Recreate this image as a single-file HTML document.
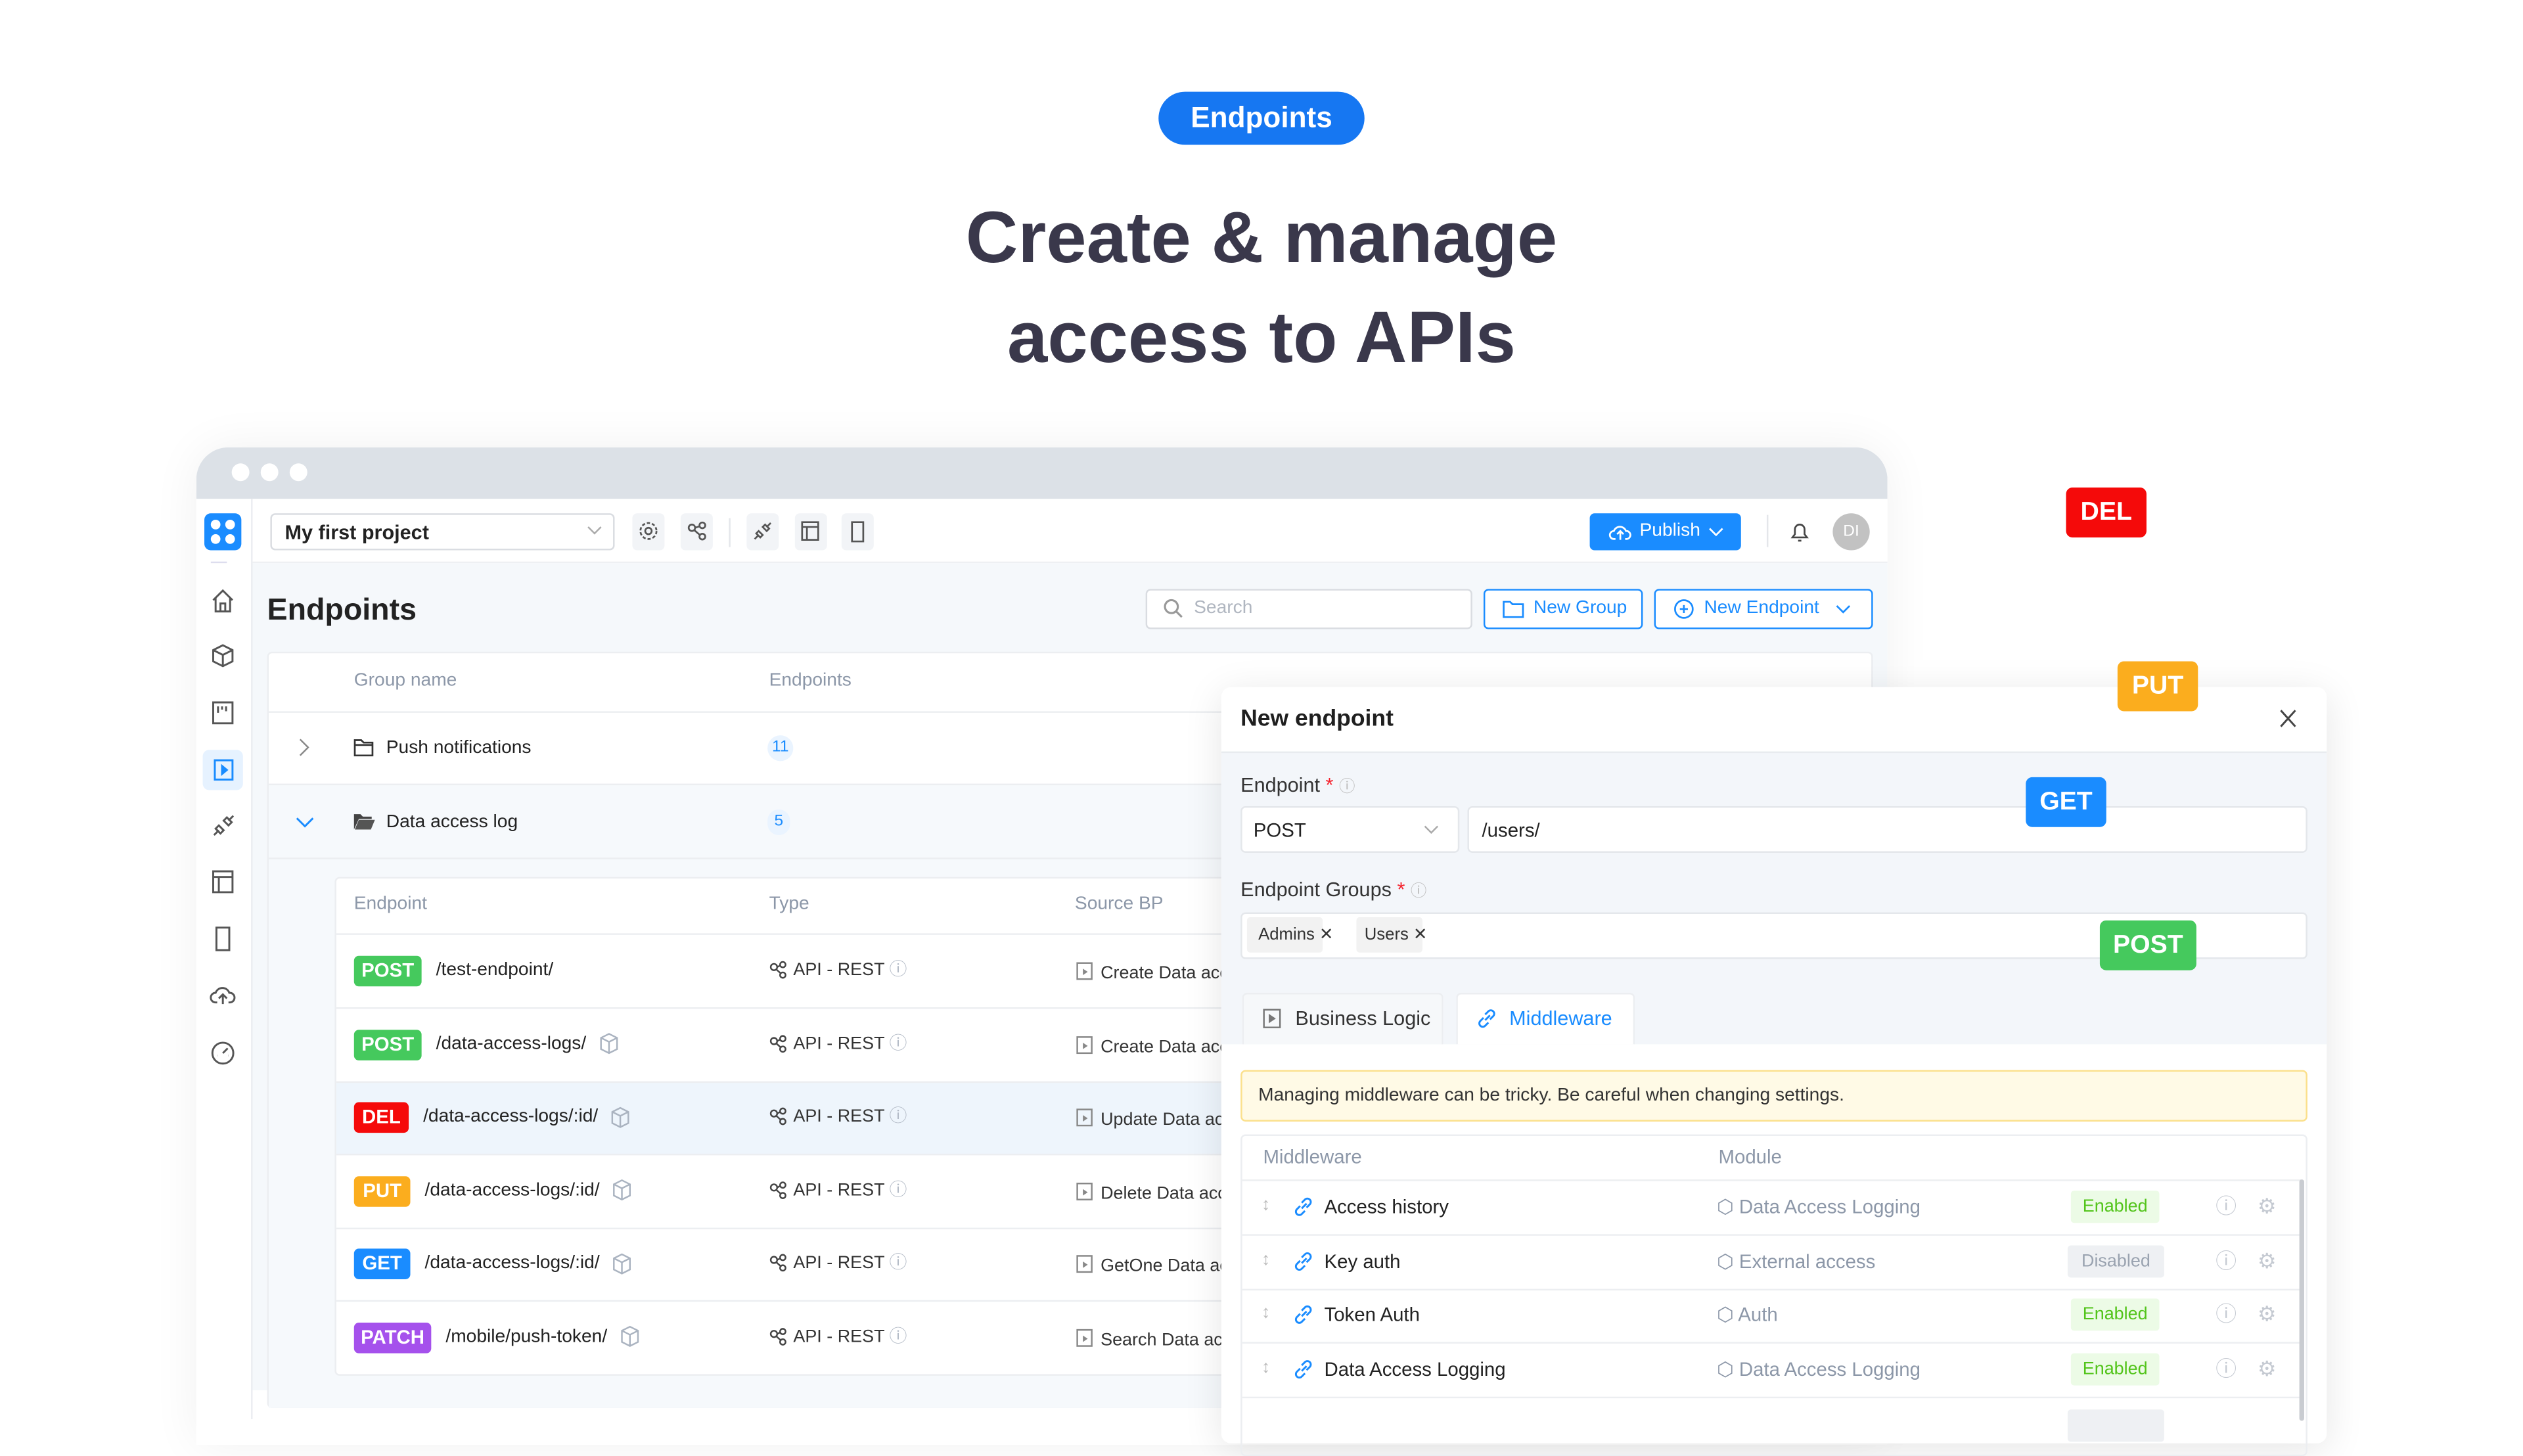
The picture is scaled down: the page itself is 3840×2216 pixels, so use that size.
<!DOCTYPE html>
<html><head><meta charset="utf-8"><style>
*{box-sizing:border-box;margin:0;padding:0}
html,body{width:3840px;height:2160px;overflow:hidden;background:#fff}
#r{position:absolute;left:0;top:0;width:1568px;height:882px;transform:scale(2.44898);transform-origin:0 0;font-family:"Liberation Sans",sans-serif;color:#222}
.a{position:absolute}
.t{position:absolute;white-space:nowrap;line-height:1}
.m{position:absolute;color:#fff;font-weight:bold;border-radius:3px;text-align:center;font-size:12px;line-height:19px;height:19px}
.fb{position:absolute;color:#fff;font-weight:bold;border-radius:4px;text-align:center;font-size:16px;line-height:31px;height:31px}
.ib{position:absolute;top:319px;width:20px;height:23px;background:#f2f4f7;border-radius:3px}
.hl{position:absolute;height:1px;background:#eceef1}
.gray{color:#8c97a8}
svg{position:absolute;overflow:visible}
.sh{display:inline-block;width:11px;height:11px;vertical-align:-1px;margin-right:3px}
.pb{display:inline-block;width:10px;height:11px;border:1px solid #888;vertical-align:-1px;margin-right:5px;position:relative}
.pb:after{content:"";position:absolute;left:3px;top:2.5px;border-left:3px solid #888;border-top:2.5px solid transparent;border-bottom:2.5px solid transparent}
</style></head><body><div id="r">

<div class="a" style="left:720px;top:57px;width:128px;height:33px;border-radius:17px;background:#1677f2;color:#fff;font-size:18px;font-weight:bold;text-align:center;line-height:33px">Endpoints</div>
<div class="t" style="left:0;width:1568px;text-align:center;top:125px;font-size:45px;font-weight:bold;color:#3a384b">Create &amp; manage</div>
<div class="t" style="left:0;width:1568px;text-align:center;top:187px;font-size:45px;font-weight:bold;color:#3a384b">access to APIs</div>

<div class="a" style="left:122px;top:278px;width:1051px;height:620px;border-radius:20px 20px 0 0;background:#fff;box-shadow:0 0 30px rgba(0,0,0,.06);overflow:hidden">
 <div class="a" style="left:0;top:0;width:1051px;height:32px;background:#dce1e7"></div>
 <div class="a" style="left:22px;top:10px;width:11px;height:11px;border-radius:50%;background:#fff"></div>
 <div class="a" style="left:40px;top:10px;width:11px;height:11px;border-radius:50%;background:#fff"></div>
 <div class="a" style="left:58px;top:10px;width:11px;height:11px;border-radius:50%;background:#fff"></div>
</div>
<div class="a" style="left:156px;top:310px;width:1px;height:572px;background:#eceef1"></div>
<div class="a" style="left:127px;top:319px;width:23px;height:23px;border-radius:4px;background:#1a8cff"></div>
<div class="a" style="left:131px;top:323px;width:6px;height:6px;border-radius:3px;background:#fff"></div><div class="a" style="left:140px;top:323px;width:6px;height:6px;border-radius:3px;background:#fff"></div><div class="a" style="left:131px;top:332px;width:6px;height:6px;border-radius:3px;background:#fff"></div><div class="a" style="left:140px;top:332px;width:6px;height:6px;border-radius:3px;background:#fff"></div>
<div class="a" style="left:131px;top:349px;width:10px;height:1px;background:#dde"></div>
<svg style="left:131px;top:366px" width="15" height="15" fill="none" stroke="#555" stroke-width="1.2"><path d="M1.5 7 7.5 1 13.5 7M3 5.5V14h9V5.5M6 14V9h3v5"/></svg>
<svg style="left:131px;top:400px" width="15" height="15" fill="none" stroke="#555" stroke-width="1.2"><path d="M7.5 1 13.5 4v7l-6 3-6-3V4zM1.5 4l6 3 6-3M7.5 7v7"/></svg>
<svg style="left:132px;top:436px" width="13" height="14" fill="none" stroke="#555" stroke-width="1.2"><path d="M.5.5h12v13H.5zM3.5 3v4M6 3v2M8.5 3v3"/></svg>
<div class="a" style="left:126px;top:466px;width:25px;height:25px;border-radius:4px;background:#e6f2ff"></div>
<svg style="left:133px;top:472px" width="12" height="13" fill="none" stroke="#1a8cff" stroke-width="1.2"><path d="M.5.5h11v12H.5z"/><path d="M5 4l3 2.5L5 9z" fill="#1a8cff"/></svg>
<svg style="left:132px;top:506px" width="14" height="14" fill="none" stroke="#555" stroke-width="1.2"><path d="M1 13l3-3M13 1l-3 3M4 7l3 3-2 2-3-3zM7 4l3 3 2-2-3-3z"/></svg>
<svg style="left:132px;top:541px" width="13" height="14" fill="none" stroke="#555" stroke-width="1.2"><path d="M.5.5h12v13H.5zM.5 4h12M4 4v9.5"/></svg>
<svg style="left:134px;top:576px" width="9" height="15" fill="none" stroke="#555" stroke-width="1.2"><path d="M.5.5h8v14h-8z"/></svg>
<svg style="left:131px;top:612px" width="15" height="13" fill="none" stroke="#555" stroke-width="1.2"><path d="M4 11H3a3 3 0 010-6 4.5 4.5 0 018.5 0 3 3 0 01.5 6h-1M7.5 12V6M5 8.5l2.5-2.5L10 8.5"/></svg>
<svg style="left:131px;top:647px" width="15" height="15" fill="none" stroke="#555" stroke-width="1.2"><circle cx="7.5" cy="7.5" r="6.5"/><path d="M7.5 7.5l3-3M4 9h.1M11 9h.1"/></svg>

<div class="a" style="left:157px;top:349px;width:1016px;height:1px;background:#eef0f3"></div>
<div class="a" style="left:168px;top:319px;width:214px;height:23px;border:1px solid #d9dce1;border-radius:3px"></div>
<div class="t" style="left:177px;top:325px;font-size:12.5px;font-weight:bold;color:#222">My first project</div>
<svg style="left:365px;top:327px" width="9" height="6" fill="none" stroke="#aaa"><path d="M.5.5l4 4 4-4"/></svg>
<div class="ib" style="left:393px"></div><div class="ib" style="left:423px"></div>
<div class="a" style="left:453px;top:322px;width:1px;height:18px;background:#e4e6ea"></div>
<div class="ib" style="left:464px"></div><div class="ib" style="left:494px"></div><div class="ib" style="left:523px"></div>
<svg style="left:397px;top:324px" width="12" height="12" fill="none" stroke="#555" stroke-width="1.1"><circle cx="6" cy="6" r="2"/><circle cx="6" cy="6" r="5" stroke-dasharray="2 1.2"/></svg>
<svg style="left:427px;top:324px" width="12" height="12" fill="none" stroke="#555" stroke-width="1.1"><circle cx="3" cy="4" r="2"/><circle cx="9.5" cy="2.5" r="1.8"/><circle cx="9.5" cy="9.5" r="1.8"/><path d="M5 4l3-1M4.5 5.5l3.5 3"/></svg>
<svg style="left:468px;top:324px" width="12" height="12" fill="none" stroke="#555" stroke-width="1.1"><path d="M1 11l2.5-2.5M11 1L8.5 3.5M3.5 6l2.5 2.5-1.5 1.5-2.5-2.5zM6 3.5l2.5 2.5 1.5-1.5L7.5 2z"/></svg>
<svg style="left:498px;top:324px" width="11" height="12" fill="none" stroke="#555" stroke-width="1.1"><path d="M.5.5h10v11H.5zM.5 3.5h10M3.5 3.5v8"/></svg>
<svg style="left:529px;top:324px" width="8" height="13" fill="none" stroke="#555" stroke-width="1.1"><path d="M.5.5h7v12h-7z"/></svg>
<div class="a" style="left:988px;top:319px;width:94px;height:23px;border-radius:3px;background:#1a8cff"></div>
<svg style="left:1000px;top:325px" width="14" height="11" fill="none" stroke="#fff" stroke-width="1.1"><path d="M4 10H3a2.5 2.5 0 010-5 4 4 0 017.5 0 2.5 2.5 0 01.5 5h-1M7 10.5V5M5 7l2-2 2 2"/></svg>
<div class="t" style="left:1019px;top:325px;font-size:11.5px;color:#fff">Publish</div>
<svg style="left:1062px;top:328px" width="9" height="5" fill="none" stroke="#fff" stroke-width="1.1"><path d="M.5.5l4 4 4-4"/></svg>
<div class="a" style="left:1098px;top:320px;width:1px;height:20px;background:#e4e6ea"></div>
<svg style="left:1113px;top:324px" width="11" height="13" fill="none" stroke="#444" stroke-width="1.1"><path d="M1 10h9L8.5 8V5A3 3 0 002.5 5v3zM4.5 12h2"/></svg>
<div class="a" style="left:1139px;top:319px;width:23px;height:23px;border-radius:50%;background:#c2c2c2;color:#fff;font-size:10px;text-align:center;line-height:23px">DI</div>

<div class="a" style="left:157px;top:350px;width:1016px;height:514px;background:#f5f8fb"></div>
<div class="t" style="left:166px;top:370px;font-size:19px;font-weight:bold;color:#222">Endpoints</div>
<div class="a" style="left:712px;top:366px;width:203px;height:25px;border:1px solid #d9dce1;border-radius:3px;background:#fff"></div>
<svg style="left:723px;top:372px" width="12" height="12" fill="none" stroke="#999" stroke-width="1.3"><circle cx="5" cy="5" r="4"/><path d="M8 8l3.5 3.5"/></svg>
<div class="t" style="left:742px;top:373px;font-size:11.5px;color:#b0b6c0">Search</div>
<div class="a" style="left:922px;top:366px;width:99px;height:25px;border:1px solid #1a8cff;border-radius:3px;background:#fff"></div>
<svg style="left:934px;top:373px" width="13" height="11" fill="none" stroke="#1a8cff" stroke-width="1.1"><path d="M.5 1h4l1.5 1.5h6.5v8H.5z"/></svg>
<div class="t" style="left:953px;top:373px;font-size:11.5px;color:#1a8cff">New Group</div>
<div class="a" style="left:1028px;top:366px;width:136px;height:25px;border:1px solid #1a8cff;border-radius:3px;background:#fff"></div>
<svg style="left:1040px;top:372px" width="13" height="13" fill="none" stroke="#1a8cff" stroke-width="1.1"><circle cx="6.5" cy="6.5" r="5.5"/><path d="M6.5 4v5M4 6.5h5"/></svg>
<div class="t" style="left:1059px;top:373px;font-size:11.5px;color:#1a8cff">New Endpoint</div>
<svg style="left:1141px;top:376px" width="9" height="5" fill="none" stroke="#1a8cff" stroke-width="1.1"><path d="M.5.5l4 4 4-4"/></svg>

<div class="a" style="left:166px;top:405px;width:998px;height:470px;background:#fff;border:1px solid #eceef1;border-radius:3px"></div>
<div class="t gray" style="left:220px;top:418px;font-size:11.5px">Group name</div>
<div class="t gray" style="left:478px;top:418px;font-size:11.5px">Endpoints</div>
<div class="hl" style="left:167px;top:442px;width:996px"></div>
<svg style="left:186px;top:459px" width="6" height="11" fill="none" stroke="#888"><path d="M.5.5l5 5-5 5"/></svg>
<svg style="left:220px;top:459px" width="12" height="11" fill="none" stroke="#333" stroke-width="1.1"><path d="M.5 1h4l1.5 1.5h5.5v8H.5zM.5 4h11"/></svg>
<div class="t" style="left:240px;top:460px;font-size:11.5px;color:#222">Push notifications</div>
<div class="a" style="left:477px;top:457px;width:16px;height:16px;border-radius:8px;background:#eaf4ff;color:#1a8cff;font-size:10px;text-align:center;line-height:16px">11</div>
<div class="a" style="left:167px;top:487px;width:996px;height:388px;background:#f6f9fc;border-top:1px solid #eceef1"></div>
<svg style="left:184px;top:508px" width="11" height="6" fill="none" stroke="#1a8cff" stroke-width="1.2"><path d="M.5.5l5 5 5-5"/></svg>
<svg style="left:220px;top:505px" width="13" height="11"><path d="M0 1h4l1.5 1.5H11V4H3L0 10.5z" fill="#444"/><path d="M3 4.5h10L10.5 10.5H.5z" fill="#555"/></svg>
<div class="t" style="left:240px;top:506px;font-size:11.5px;color:#222">Data access log</div>
<div class="a" style="left:477px;top:503px;width:14px;height:16px;border-radius:8px;background:#eaf4ff;color:#1a8cff;font-size:10px;text-align:center;line-height:16px">5</div>
<div class="hl" style="left:167px;top:533px;width:996px"></div>

<div class="a" style="left:208px;top:545px;width:955px;height:310px;background:#fff;border:1px solid #eceef1;border-radius:3px"></div>
<div class="t gray" style="left:220px;top:557px;font-size:11.5px">Endpoint</div>
<div class="t gray" style="left:478px;top:557px;font-size:11.5px">Type</div>
<div class="t gray" style="left:668px;top:557px;font-size:11.5px">Source BP</div>
<div class="hl" style="left:209px;top:580px;width:953px"></div>
<div class="a" style="left:209px;top:672px;width:953px;height:45px;background:#eef5fc"></div>
<div class="hl" style="left:209px;top:626px;width:953px"></div><div class="hl" style="left:209px;top:672px;width:953px"></div><div class="hl" style="left:209px;top:717px;width:953px"></div><div class="hl" style="left:209px;top:763px;width:953px"></div><div class="hl" style="left:209px;top:808px;width:953px"></div>

<div class="m" style="left:220px;top:594px;width:42px;background:#45c95d">POST</div><div class="t" style="left:271px;top:598px;font-size:11.5px">/test-endpoint/</div>
<div class="m" style="left:220px;top:640px;width:42px;background:#45c95d">POST</div><div class="t" style="left:271px;top:644px;font-size:11.5px">/data-access-logs/</div>
<div class="m" style="left:220px;top:685px;width:34px;background:#f50a0a">DEL</div><div class="t" style="left:263px;top:689px;font-size:11.5px">/data-access-logs/:id/</div>
<div class="m" style="left:220px;top:731px;width:35px;background:#fbad1e">PUT</div><div class="t" style="left:264px;top:735px;font-size:11.5px">/data-access-logs/:id/</div>
<div class="m" style="left:220px;top:776px;width:35px;background:#1a8cff">GET</div><div class="t" style="left:264px;top:780px;font-size:11.5px">/data-access-logs/:id/</div>
<div class="m" style="left:220px;top:822px;width:48px;background:#a551ec">PATCH</div><div class="t" style="left:277px;top:826px;font-size:11.5px">/mobile/push-token/</div>
<svg style="left:373px;top:642px" width="11" height="13" fill="none" stroke="#aab3c0" stroke-width="1"><path d="M5.5.5l5 2.5v7l-5 2.5-5-2.5V3zM.5 3l5 2.5 5-2.5M5.5 5.5v7"/></svg>
<svg style="left:380px;top:688px" width="11" height="13" fill="none" stroke="#aab3c0" stroke-width="1"><path d="M5.5.5l5 2.5v7l-5 2.5-5-2.5V3zM.5 3l5 2.5 5-2.5M5.5 5.5v7"/></svg>
<svg style="left:381px;top:733px" width="11" height="13" fill="none" stroke="#aab3c0" stroke-width="1"><path d="M5.5.5l5 2.5v7l-5 2.5-5-2.5V3zM.5 3l5 2.5 5-2.5M5.5 5.5v7"/></svg>
<svg style="left:381px;top:779px" width="11" height="13" fill="none" stroke="#aab3c0" stroke-width="1"><path d="M5.5.5l5 2.5v7l-5 2.5-5-2.5V3zM.5 3l5 2.5 5-2.5M5.5 5.5v7"/></svg>
<svg style="left:386px;top:824px" width="11" height="13" fill="none" stroke="#aab3c0" stroke-width="1"><path d="M5.5.5l5 2.5v7l-5 2.5-5-2.5V3zM.5 3l5 2.5 5-2.5M5.5 5.5v7"/></svg>

<svg width="0" height="0"><defs><g id="sh" fill="none" stroke="#444" stroke-width="1"><circle cx="3" cy="4" r="2"/><circle cx="8.5" cy="2.5" r="1.7"/><circle cx="8.5" cy="9" r="1.7"/><path d="M5 4l2-1M4.5 5.5l2.8 2.5"/></g></defs></svg>
<svg style="left:478px;top:597px" width="11" height="11"><use href="#sh"/></svg>
<svg style="left:478px;top:643px" width="11" height="11"><use href="#sh"/></svg>
<svg style="left:478px;top:688px" width="11" height="11"><use href="#sh"/></svg>
<svg style="left:478px;top:734px" width="11" height="11"><use href="#sh"/></svg>
<svg style="left:478px;top:779px" width="11" height="11"><use href="#sh"/></svg>
<svg style="left:478px;top:825px" width="11" height="11"><use href="#sh"/></svg>
<div class="t" style="left:493px;top:598px;font-size:11px;color:#333">API - REST <span style="color:#b0b8c4">ⓘ</span></div>
<div class="t" style="left:493px;top:644px;font-size:11px;color:#333">API - REST <span style="color:#b0b8c4">ⓘ</span></div>
<div class="t" style="left:493px;top:689px;font-size:11px;color:#333">API - REST <span style="color:#b0b8c4">ⓘ</span></div>
<div class="t" style="left:493px;top:735px;font-size:11px;color:#333">API - REST <span style="color:#b0b8c4">ⓘ</span></div>
<div class="t" style="left:493px;top:780px;font-size:11px;color:#333">API - REST <span style="color:#b0b8c4">ⓘ</span></div>
<div class="t" style="left:493px;top:826px;font-size:11px;color:#333">API - REST <span style="color:#b0b8c4">ⓘ</span></div>
<div class="t" style="left:669px;top:598px;font-size:11px;color:#333"><span class="pb"></span>Create Data acc</div>
<div class="t" style="left:669px;top:644px;font-size:11px;color:#333"><span class="pb"></span>Create Data acc</div>
<div class="t" style="left:669px;top:689px;font-size:11px;color:#333"><span class="pb"></span>Update Data ac</div>
<div class="t" style="left:669px;top:735px;font-size:11px;color:#333"><span class="pb"></span>Delete Data acc</div>
<div class="t" style="left:669px;top:780px;font-size:11px;color:#333"><span class="pb"></span>GetOne Data ac</div>
<div class="t" style="left:669px;top:826px;font-size:11px;color:#333"><span class="pb"></span>Search Data acc</div>

<div class="a" style="left:759px;top:427px;width:687px;height:470px;background:#fff;border-radius:6px;box-shadow:0 4px 24px rgba(0,0,0,.10);overflow:hidden">
 <div class="a" style="left:0;top:40px;width:687px;height:182px;background:#f3f6fa;border-top:1px solid #e8ebef"></div>
</div>
<div class="t" style="left:771px;top:440px;font-size:14.5px;font-weight:bold;color:#1f1f1f">New endpoint</div>
<svg style="left:1417px;top:441px" width="10" height="11" fill="none" stroke="#444" stroke-width="1.2"><path d="M.5.5l9 10M9.5.5l-9 10"/></svg>
<div class="t" style="left:771px;top:482px;font-size:12.5px;color:#333">Endpoint <span style="color:#f5222d">*</span> <span style="color:#bbb;font-size:10px">ⓘ</span></div>
<div class="a" style="left:771px;top:501px;width:136px;height:29px;background:#fff;border:1px solid #e4e7eb;border-radius:3px"></div>
<div class="t" style="left:779px;top:510px;font-size:12px;color:#222">POST</div>
<svg style="left:885px;top:513px" width="9" height="5" fill="none" stroke="#aaa"><path d="M.5.5l4 4 4-4"/></svg>
<div class="a" style="left:912px;top:501px;width:522px;height:29px;background:#fff;border:1px solid #e4e7eb;border-radius:3px"></div>
<div class="t" style="left:921px;top:510px;font-size:12px;color:#222">/users/</div>
<div class="t" style="left:771px;top:547px;font-size:12.5px;color:#333">Endpoint Groups <span style="color:#f5222d">*</span> <span style="color:#bbb;font-size:10px">ⓘ</span></div>
<div class="a" style="left:771px;top:567px;width:663px;height:29px;background:#fff;border:1px solid #e4e7eb;border-radius:3px"></div>
<div class="a" style="left:775px;top:570px;width:47px;height:22px;background:#f2f2f2;border-radius:2px"></div>
<div class="t" style="left:782px;top:576px;font-size:10.5px;color:#333">Admins ✕</div>
<div class="a" style="left:843px;top:570px;width:41px;height:22px;background:#f2f2f2;border-radius:2px"></div>
<div class="t" style="left:848px;top:576px;font-size:10.5px;color:#333">Users ✕</div>
<div class="a" style="left:772px;top:617px;width:125px;height:32px;background:#f6f8fa;border:1px solid #eceef1;border-bottom:0;border-radius:3px 3px 0 0"></div>
<svg style="left:785px;top:627px" width="11" height="12" fill="none" stroke="#777"><path d="M.5.5h10v11H.5z"/><path d="M4 4l3 2-3 2z" fill="#777"/></svg>
<div class="t" style="left:805px;top:627px;font-size:12.5px;color:#333">Business Logic</div>
<div class="a" style="left:905px;top:617px;width:111px;height:32px;background:#fff;border:1px solid #eceef1;border-bottom:0;border-radius:3px 3px 0 0"></div>
<svg style="left:918px;top:627px" width="12" height="12" fill="none" stroke="#1a8cff" stroke-width="1.2"><path d="M5 7l3-3M4 5.5l-2 2a2 2 0 003 3l2-2M8 6.5l2-2a2 2 0 00-3-3l-2 2"/></svg>
<div class="t" style="left:938px;top:627px;font-size:12.5px;color:#1a8cff">Middleware</div>
<div class="a" style="left:771px;top:665px;width:663px;height:32px;background:#fffae6;border:1px solid #fbe08c;border-radius:3px"></div>
<div class="t" style="left:782px;top:676px;font-size:11.5px;color:#333">Managing middleware can be tricky. Be careful when changing settings.</div>
<div class="a" style="left:771px;top:705px;width:663px;height:200px;border:1px solid #eceef1;border-radius:3px"></div>
<div class="t" style="left:785px;top:713px;font-size:12px;color:#8c97a8">Middleware</div>
<div class="t" style="left:1068px;top:713px;font-size:12px;color:#8c97a8">Module</div>
<div class="hl" style="left:772px;top:733px;width:658px"></div><div class="hl" style="left:772px;top:767px;width:658px"></div><div class="hl" style="left:772px;top:801px;width:658px"></div><div class="hl" style="left:772px;top:834px;width:658px"></div><div class="hl" style="left:772px;top:868px;width:658px"></div>
<div class="a" style="left:1429px;top:733px;width:3px;height:150px;background:#c9ccd1;border-radius:2px"></div>

<div class="t" style="left:784px;top:744px;font-size:11px;color:#bbb">↕</div><div class="t" style="left:784px;top:778px;font-size:11px;color:#bbb">↕</div><div class="t" style="left:784px;top:811px;font-size:11px;color:#bbb">↕</div><div class="t" style="left:784px;top:845px;font-size:11px;color:#bbb">↕</div>
<svg style="left:804px;top:744px" width="12" height="12" fill="none" stroke="#1a8cff" stroke-width="1.2"><path d="M5 7l3-3M4 5.5l-2 2a2 2 0 003 3l2-2M8 6.5l2-2a2 2 0 00-3-3l-2 2"/></svg>
<svg style="left:804px;top:778px" width="12" height="12" fill="none" stroke="#1a8cff" stroke-width="1.2"><path d="M5 7l3-3M4 5.5l-2 2a2 2 0 003 3l2-2M8 6.5l2-2a2 2 0 00-3-3l-2 2"/></svg>
<svg style="left:804px;top:811px" width="12" height="12" fill="none" stroke="#1a8cff" stroke-width="1.2"><path d="M5 7l3-3M4 5.5l-2 2a2 2 0 003 3l2-2M8 6.5l2-2a2 2 0 00-3-3l-2 2"/></svg>
<svg style="left:804px;top:845px" width="12" height="12" fill="none" stroke="#1a8cff" stroke-width="1.2"><path d="M5 7l3-3M4 5.5l-2 2a2 2 0 003 3l2-2M8 6.5l2-2a2 2 0 00-3-3l-2 2"/></svg>
<div class="t" style="left:823px;top:744px;font-size:12px;color:#222">Access history</div>
<div class="t" style="left:823px;top:778px;font-size:12px;color:#222">Key auth</div>
<div class="t" style="left:823px;top:811px;font-size:12px;color:#222">Token Auth</div>
<div class="t" style="left:823px;top:845px;font-size:12px;color:#222">Data Access Logging</div>
<div class="t" style="left:1067px;top:744px;font-size:12px;color:#8c97a8">⬡ Data Access Logging</div>
<div class="t" style="left:1067px;top:778px;font-size:12px;color:#8c97a8">⬡ External access</div>
<div class="t" style="left:1067px;top:811px;font-size:12px;color:#8c97a8">⬡ Auth</div>
<div class="t" style="left:1067px;top:845px;font-size:12px;color:#8c97a8">⬡ Data Access Logging</div>
<div class="a" style="left:1287px;top:740px;width:55px;height:20px;background:#ecfbe6;color:#52c41a;font-size:11px;text-align:center;line-height:20px;border-radius:2px">Enabled</div>
<div class="a" style="left:1285px;top:774px;width:60px;height:20px;background:#eef0f3;color:#9aa3b0;font-size:11px;text-align:center;line-height:20px;border-radius:2px">Disabled</div>
<div class="a" style="left:1287px;top:807px;width:55px;height:20px;background:#ecfbe6;color:#52c41a;font-size:11px;text-align:center;line-height:20px;border-radius:2px">Enabled</div>
<div class="a" style="left:1287px;top:841px;width:55px;height:20px;background:#ecfbe6;color:#52c41a;font-size:11px;text-align:center;line-height:20px;border-radius:2px">Enabled</div>
<div class="a" style="left:1285px;top:876px;width:60px;height:20px;background:#eef0f3;border-radius:2px"></div>
<div class="t" style="left:1377px;top:743px;font-size:13px;color:#c5cad2">ⓘ</div><div class="t" style="left:1403px;top:743px;font-size:13px;color:#c5cad2">⚙</div>
<div class="t" style="left:1377px;top:777px;font-size:13px;color:#c5cad2">ⓘ</div><div class="t" style="left:1403px;top:777px;font-size:13px;color:#c5cad2">⚙</div>
<div class="t" style="left:1377px;top:810px;font-size:13px;color:#c5cad2">ⓘ</div><div class="t" style="left:1403px;top:810px;font-size:13px;color:#c5cad2">⚙</div>
<div class="t" style="left:1377px;top:844px;font-size:13px;color:#c5cad2">ⓘ</div><div class="t" style="left:1403px;top:844px;font-size:13px;color:#c5cad2">⚙</div>

<div class="fb" style="left:1284px;top:303px;width:50px;background:#f50a0a">DEL</div>
<div class="fb" style="left:1316px;top:411px;width:50px;background:#fbad1e">PUT</div>
<div class="fb" style="left:1259px;top:483px;width:50px;background:#1a8cff">GET</div>
<div class="fb" style="left:1305px;top:572px;width:60px;background:#45c95d">POST</div>
</div></body></html>
